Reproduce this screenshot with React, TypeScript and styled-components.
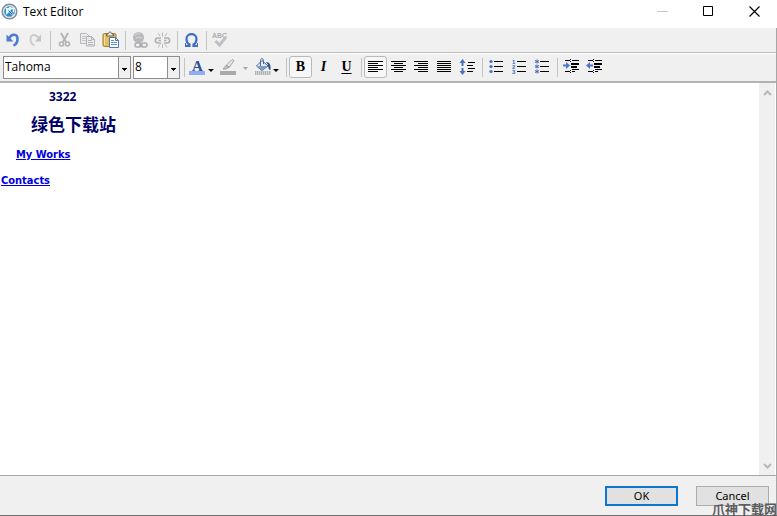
import React, { useState } from "react";
import styled, { createGlobalStyle, css } from "styled-components";

const Global = createGlobalStyle`
  *, *::before, *::after { box-sizing: border-box; }
  html, body, #root { height: 100%; margin: 0; }
  body { overflow: hidden; font-family: "Open Sans", "Noto Sans", sans-serif; font-size: 12px; color: #000; }
`;

const Window = styled.div`
  position: relative;
  display: flex;
  flex-direction: column;
  height: 100%;
  background: #f0f0f1;
  border-bottom: 1px solid #707070;
`;

const TitleBar = styled.header`
  display: flex;
  align-items: center;
  height: 28px;
  flex: none;
  background: #fff;
`;

const Title = styled.h1`
  flex: 1;
  margin: 0;
  padding: 0 5px 4px;
  font-size: 12px;
  font-weight: 400;
  line-height: 20px;
`;

const AppIcon = styled.svg`
  width: 17px;
  height: 17px;
  margin: 0 0 5px 1px;
`;

const CaptionButton = styled.button`
  display: flex;
  justify-content: center;
  width: 46px;
  height: 28px;
  padding: 5px 0 0;
  border: 0;
  background: none;
`;

const Body = styled.div`
  display: flex;
  flex-direction: column;
  flex: 1;
  min-height: 0;
  border-right: 1px solid #a6a6a6;
`;

const Toolbar = styled.div<{ $format?: boolean }>`
  display: flex;
  align-items: center;
  flex: none;
  ${(p) =>
    p.$format
      ? css`
          height: 30px;
          padding: 0 0 1px 3px;
          border-top: 1px solid #fff;
          border-bottom: 2px solid #b2b2b2;
        `
      : css`
          height: 25px;
          padding-left: 1px;
          border-bottom: 1px solid #bdbdbd;
        `}
`;

const Separator = styled.span`
  width: 6px;
  height: 19px;
  flex: none;
  background: linear-gradient(#c3c3c5, #c3c3c5) 3px 0 / 1px 100% no-repeat;
`;

const ToolButton = styled.button<{ $wide?: boolean }>`
  display: flex;
  align-items: center;
  justify-content: center;
  flex: none;
  width: ${(p) => (p.$wide ? 32 : 23)}px;
  height: 22px;
  padding: 0;
  border: 1px solid transparent;
  border-radius: 3px;
  background: none;
  color: #000;

  &[aria-pressed="true"] {
    border-color: #b9b9bb;
    background: #f7f7f8;
  }
  & > svg { flex: none; }
`;

const Combos = styled.div`
  display: flex;
  gap: 2px;
  padding-right: 1px;
`;

const Combo = styled.label<{ $size?: boolean }>`
  position: relative;
  display: flex;
  width: ${(p) => (p.$size ? 47 : 128)}px;
  height: 23px;
  border: 1px solid #8e8e8e;
  background: #fff;

  select {
    appearance: none;
    width: 100%;
    padding: 0 14px 0 1px;
    border: 0;
    outline: 0;
    background: none;
    font: 12px/20px "Open Sans", "Noto Sans", sans-serif;
    color: #000;
  }
`;

const ComboArrow = styled.span`
  position: absolute;
  top: 0;
  right: 0;
  bottom: 0;
  display: flex;
  align-items: center;
  justify-content: center;
  width: 12px;
  padding-top: 4px;
  border-left: 1px solid #8e8e8e;
  background: #f0f0f1;
  pointer-events: none;
`;

const Editor = styled.main`
  display: flex;
  flex: 1;
  min-height: 0;
  background: #fff;
  border-bottom: 1px solid #a8a8a8;
`;

const Document = styled.div`
  flex: 1;
  padding: 5px 1px;
  outline: 0;
  color: #000066;
  font-family: "DejaVu Sans Condensed", "Noto Sans", "Noto Sans CJK SC", sans-serif;
`;

const Paragraph = styled.p<{ $indent: number; $kind?: "number" | "cjk" }>`
  margin: 0;
  padding-left: ${(p) => p.$indent}px;
  font-size: 11px;
  font-weight: 700;
  line-height: 26px;
  ${(p) =>
    p.$kind === "number" &&
    css`
      font-family: "Noto Sans", sans-serif;
      font-size: 12px;
      line-height: 18px;
    `}
  ${(p) =>
    p.$kind === "cjk" &&
    css`
      font-family: "Noto Sans CJK SC", sans-serif;
      font-size: 17px;
      line-height: 36px;
    `}

  a { color: #0000dd; }
`;

const ScrollTrack = styled.div`
  display: flex;
  flex-direction: column;
  justify-content: space-between;
  width: 17px;
  background: #f0f0f1;
  border-right: 1px solid #fff;
`;

const ScrollButton = styled.button`
  display: flex;
  align-items: center;
  justify-content: center;
  height: 19px;
  padding: 0;
  border: 0;
  background: none;
`;

const Footer = styled.footer`
  display: flex;
  justify-content: flex-end;
  gap: 18px;
  flex: none;
  height: 39px;
  padding: 10px 7px;
`;

const DialogButton = styled.button<{ $primary?: boolean }>`
  width: 73px;
  height: 20px;
  padding: 0;
  border: ${(p) => (p.$primary ? "2px solid #0f76d0" : "1px solid #adadad")};
  background: #e1e1e1;
  font: 11px/16px "Noto Sans", sans-serif;
  color: #000;
`;

const Watermark = styled.span`
  position: absolute;
  right: 0;
  bottom: -2px;
  color: #5c5c5e;
  font: 700 13px/16px "Noto Sans CJK SC", sans-serif;
  pointer-events: none;
`;

type IconProps = { children: React.ReactNode; w?: number; crisp?: boolean };
const Icon = ({ children, w = 17, crisp }: IconProps) => (
  <svg width={w} height={18} viewBox={`0 0 ${w} 18`} fill="none" aria-hidden="true" shapeRendering={crisp ? "crispEdges" : "auto"}>
    {children}
  </svg>
);

const Chevron = ({ up }: { up?: boolean }) => (
  <svg width="9" height="6" viewBox="0 0 9 6" fill="none" aria-hidden="true">
    <path d={up ? "M1 5 4.5 1.5 8 5" : "M1 1 4.5 4.5 8 1"} stroke="#b8b8ba" strokeWidth="2" />
  </svg>
);

const DownTriangle = () => (
  <svg width="5" height="3" viewBox="0 0 5 3" shapeRendering="crispEdges" aria-hidden="true">
    <path d="M0 0h5v1H0zM1 1h3v1H1zM2 2h1v1H2z" fill="#000" />
  </svg>
);

const Undo = () => (
  <Icon>
    <path d="M2.500 3.500v7h7z" fill="#4c7dd2" />
    <path d="M5 7.500C7.500 2.500 13.500 2.500 13.500 8C13.500 11.500 12 13.500 9.500 14.500" stroke="#4c7dd2" strokeWidth="2.600" />
  </Icon>
);
const Redo = () => (
  <Icon>
    <path d="M14 3.500v7H8z" fill="#c4c4c7" />
    <path d="M12 7.500C9 2.500 3.500 3 3.500 8C3.500 11.500 5 13.500 7.500 14.500" stroke="#cdcdd0" strokeWidth="2" />
  </Icon>
);
const Cut = () => (
  <Icon>
    <path d="M5 2 10 11M12 2 7 11" stroke="#b2b2b5" strokeWidth="1.800" />
    <circle cx="5.500" cy="13" r="2" stroke="#b2b2b5" strokeWidth="1.600" />
    <circle cx="11.500" cy="13" r="2" stroke="#b2b2b5" strokeWidth="1.600" />
  </Icon>
);
const Copy = () => (
  <Icon>
    <path d="M1.500 2.500h6l3 3v7h-9z" fill="#ececee" stroke="#b7b7ba" />
    <path d="M3 5.500h4M3 7.500h5M3 9.500h4" stroke="#c4c4c7" />
    <path d="M7.500 5.500h5l3 3v6.500h-8z" fill="#ececee" stroke="#b2b2b5" />
    <path d="M12.500 5.500v3h3M9 9.500h4M9 11.500h5M9 13.500h5" stroke="#b7b7ba" />
  </Icon>
);
const Paste = () => (
  <Icon>
    <rect x="1" y="2.500" width="13" height="13" rx="1.500" fill="#e7bd5a" stroke="#a77a27" />
    <path d="M2.500 4v10" stroke="#f8e4a6" />
    <path d="M4.500 5V3h1.500c.5-2.600 3.500-2.600 4 0h1.500v2z" fill="#e9e5d8" stroke="#6e6450" />
    <path d="M7.500 6.500h6l3 3v7h-9z" fill="#fff" stroke="#4e79ad" />
    <path d="M9 9.500h3M9 11.500h6M9 13.500h6" stroke="#5c94d3" />
    <path d="M13.500 6.500v3h3" stroke="#4e79ad" />
  </Icon>
);
const Globe = () => (
  <Icon>
    <circle cx="7.500" cy="6.500" r="5.500" fill="#b8b8bb" />
    <path d="M4 5c1-3 4-3 5-2M5 7c2-1 4-1 6 0" stroke="#cfcfd1" strokeWidth="1.500" />
    <rect x="4" y="12" width="6" height="4" rx="2" fill="#f0f0f1" stroke="#acacaf" strokeWidth="1.500" />
    <rect x="10" y="12" width="6" height="4" rx="2" fill="#f0f0f1" stroke="#acacaf" strokeWidth="1.500" />
    <path d="M8 14h4" stroke="#acacaf" strokeWidth="1.500" />
  </Icon>
);
const Unlink = () => (
  <Icon>
    <path d="M7 7H4C.500 7 .500 12 4 12h3M10 7h3c3.500 0 3.500 5 0 5h-3M4.500 9.500H7M10 9.500h2.500" stroke="#b0b0b3" strokeWidth="1.600" />
    <path d="M8.500 1.500v4M4 2l2 3M13 2l-2 3M8.500 13v4M4 16.500l2-3M13 16.500l-2-3" stroke="#b9b9bc" />
  </Icon>
);
const Omega = () => (
  <Icon>
    <path d="M2 15h4.500v-1.500C4.500 12.500 3.500 10.500 3.500 8C3.500 1.500 13.500 1.500 13.500 8C13.500 10.500 12.500 12.500 10.500 13.500V15H15" stroke="#3f6fc4" strokeWidth="2.200" />
    <path d="M2.500 12v3M14.500 12v3" stroke="#3f6fc4" />
  </Icon>
);
const SpellCheck = () => (
  <Icon>
    <text x="0" y="7" fontFamily="Liberation Sans, sans-serif" fontSize="7" fontWeight="700" fill="#adadb0">ABC</text>
    <path d="M3.500 10 7.500 14 14 6" stroke="#c0c0c3" strokeWidth="3" />
  </Icon>
);

const LetterColor = () => (
  <Icon w={32}>
    <rect x="2" y="13" width="16" height="4" fill="#8eabf3" />
    <text x="5" y="13" fontFamily="Liberation Serif, serif" fontSize="15" fontWeight="700" fill="#2d528f">A</text>
    <path d="M21 11h6l-3 3z" fill="#000" />
  </Icon>
);
const Highlight = () => (
  <Icon w={32}>
    <rect x="1" y="13" width="16" height="4" fill="#a9a9ac" />
    <path d="M7 7.500 13 1.500l2 1L10.500 9z" fill="#e8e8ea" stroke="#a3a3a6" />
    <path d="M7 7.500 10.500 9 7 11H4z" fill="#c4c4c7" stroke="#a3a3a6" />
    <path d="M24 9h5l-2.500 3z" fill="#a5a5a8" />
  </Icon>
);
const Bucket = () => (
  <Icon w={32}>
    <path d="M4 13h16v4H4z" fill="#d2d2d3" />
    <path d="M4 14h16M4 16h16" stroke="#98989b" strokeDasharray="1 1" />
    <path d="M5.500 8 11 2.500 17 8 11 12.500z" fill="#e7edf6" stroke="#45679b" />
    <path d="M6 8h10.500L11 12z" fill="#7f9cc8" />
    <path d="M9.500 8V2.500c0-2.500 3-2.500 3 0V6" stroke="#45679b" />
    <path d="M15 4c4 0 5 3 4.500 8-2 0-2.500-3-2.500-5z" fill="#34578e" />
    <path d="M22 11h6l-3 3z" fill="#000" />
  </Icon>
);

const Glyph = styled.span<{ $mark: "b" | "i" | "u" }>`
  font: 700 14px/18px "Liberation Serif", serif;
  font-style: ${(p) => (p.$mark === "i" ? "italic" : "normal")};
  text-decoration: ${(p) => (p.$mark === "u" ? "underline" : "none")};
  text-underline-offset: 2px;
`;

const rows = [3, 5, 7, 9, 11, 13];
const alignSpans = {
  left: rows.map((_, i) => (i % 2 ? [1, 10] : [1, 15])),
  center: rows.map((_, i) => (i % 2 ? [4, 9] : [1, 15])),
  right: rows.map((_, i) => (i % 2 ? [5, 10] : [1, 14])),
  justify: rows.map(() => [1, 14]),
};
const Align = ({ mode }: { mode: keyof typeof alignSpans }) => (
  <Icon crisp>
    {rows.map((y, i) => (
      <rect key={y} x={alignSpans[mode][i][0]} y={y} width={alignSpans[mode][i][1]} height="1" fill="#000" />
    ))}
  </Icon>
);
const LineSpacing = () => (
  <Icon>
    <path d="M3.500 1 6.500 5h-2v3h-2V5h-2zM3.500 17l3-4h-2v-3h-2v3h-2z" fill="#4a70ba" />
    <path d="M9 4.500h7M8 7.500h6M9 10.500h7M8 13.500h6" stroke="#000" shapeRendering="crispEdges" />
  </Icon>
);
const List = ({ kind }: { kind: "bullet" | "number" | "star" }) => (
  <Icon>
    {[4, 9, 14].map((y, i) => (
      <g key={y}>
        <rect x="6" y={y - 1} width="9" height="1" fill="#000" shapeRendering="crispEdges" />
        {kind === "bullet" && <circle cx="3" cy={y - 0.5} r="1.600" fill="#476db7" />}
        {kind === "number" && (
          <text x="1" y={y + 2} fontFamily="Liberation Sans, sans-serif" fontSize="6" fontWeight="700" fill="#3b67bd">{i + 1}</text>
        )}
        {kind === "star" && <path d={`M3 ${y - 2.5}v4M1 ${y - 1.5}l4 2M5 ${y - 1.5}l-4 2`} stroke="#476db7" />}
      </g>
    ))}
  </Icon>
);
const Indent = ({ out }: { out?: boolean }) => (
  <Icon>
    <path d="M2 2.500h5M9 2.500h7M9 11.500h7M2 13.500h5M9 13.500h3" stroke="#000" shapeRendering="crispEdges" />
    <path d="M8 6h8M8 9h6" stroke="#000" strokeWidth="2" shapeRendering="crispEdges" />
    <path d="M7.500 1v3M7.500 12v4" stroke="#000" strokeDasharray="1 1" shapeRendering="crispEdges" />
    <path d={out ? "M0 7.500 4 4v2.500h3v2H4V11z" : "M7 7.500 3 4v2.500H0v2h3V11z"} fill="#4a78cc" />
  </Icon>
);

type Tool = { label: string; icon: React.ReactNode; disabled?: boolean; wide?: boolean };
const standardTools: Tool[][] = [
  [
    { label: "Undo", icon: <Undo /> },
    { label: "Redo", icon: <Redo />, disabled: true },
  ],
  [
    { label: "Cut", icon: <Cut />, disabled: true },
    { label: "Copy", icon: <Copy />, disabled: true },
    { label: "Paste", icon: <Paste /> },
  ],
  [
    { label: "Insert link", icon: <Globe />, disabled: true },
    { label: "Remove link", icon: <Unlink />, disabled: true },
  ],
  [{ label: "Insert symbol", icon: <Omega /> }],
  [{ label: "Check spelling", icon: <SpellCheck />, disabled: true }],
];
const formatTools: Tool[][] = [
  [
    { label: "Text color", icon: <LetterColor />, wide: true },
    { label: "Highlight color", icon: <Highlight />, wide: true, disabled: true },
    { label: "Background color", icon: <Bucket />, wide: true },
  ],
  [
    { label: "Bold", icon: <Glyph $mark="b">B</Glyph> },
    { label: "Italic", icon: <Glyph $mark="i">I</Glyph> },
    { label: "Underline", icon: <Glyph $mark="u">U</Glyph> },
  ],
  [
    { label: "Align left", icon: <Align mode="left" /> },
    { label: "Align center", icon: <Align mode="center" /> },
    { label: "Align right", icon: <Align mode="right" /> },
    { label: "Justify", icon: <Align mode="justify" /> },
    { label: "Line spacing", icon: <LineSpacing /> },
  ],
  [
    { label: "Bulleted list", icon: <List kind="bullet" /> },
    { label: "Numbered list", icon: <List kind="number" /> },
    { label: "Custom list", icon: <List kind="star" /> },
  ],
  [
    { label: "Increase indent", icon: <Indent /> },
    { label: "Decrease indent", icon: <Indent out /> },
  ],
];

export default function App() {
  const [pressed, setPressed] = useState<string[]>(["Bold", "Align left"]);
  const toggle = (label: string) =>
    setPressed((list) => (list.includes(label) ? list.filter((l) => l !== label) : [...list, label]));

  return (
    <>
      <Global />
      <Window>
        <TitleBar>
          <AppIcon viewBox="0 0 17 17" fill="none" aria-hidden="true">
            <circle cx="8.500" cy="8.500" r="7.300" fill="#e3e9f0" stroke="#7f8b96" strokeWidth="1.500" />
            <circle cx="8.500" cy="8.500" r="5.300" fill="#2f8fcb" />
            <path d="M5 12V5h7z" fill="#e9f6ff" />
            <path d="M5 5l8 8M8 4.500l4.500 1v4" stroke="#e9f6ff" strokeWidth="1.500" />
            <path d="M7.500 7.500l4 4" stroke="#1769a8" />
          </AppIcon>
          <Title>Text Editor</Title>
          <CaptionButton aria-label="Minimize" disabled>
            <svg width="11" height="12" viewBox="0 0 11 12"><path d="M0 6h11v1H0z" fill="#c8c8c8" /></svg>
          </CaptionButton>
          <CaptionButton aria-label="Maximize">
            <svg width="11" height="12" viewBox="0 0 11 12"><path d="M.5 1.500h9v9h-9z" fill="none" stroke="#000" /></svg>
          </CaptionButton>
          <CaptionButton aria-label="Close">
            <svg width="11" height="12" viewBox="0 0 11 12"><path d="M.5 1.500l10 10M10.500 1.500l-10 10" stroke="#000" strokeWidth="1.200" /></svg>
          </CaptionButton>
        </TitleBar>
        <Body>
          <Toolbar role="toolbar" aria-label="Standard">
            {standardTools.map((group, i) => (
              <React.Fragment key={i}>
                {i > 0 && <Separator />}
                {group.map((t) => (
                  <ToolButton key={t.label} aria-label={t.label} disabled={t.disabled}>{t.icon}</ToolButton>
                ))}
              </React.Fragment>
            ))}
          </Toolbar>
          <Toolbar $format role="toolbar" aria-label="Formatting">
            <Combos>
              <Combo>
                <select aria-label="Font" defaultValue="Tahoma"><option>Tahoma</option></select>
                <ComboArrow><DownTriangle /></ComboArrow>
              </Combo>
              <Combo $size>
                <select aria-label="Font size" defaultValue="8"><option>8</option></select>
                <ComboArrow><DownTriangle /></ComboArrow>
              </Combo>
            </Combos>
            {formatTools.map((group, i) => (
              <React.Fragment key={i}>
                <Separator />
                {group.map((t) => (
                  <ToolButton
                    key={t.label}
                    $wide={t.wide}
                    aria-label={t.label}
                    aria-pressed={pressed.includes(t.label)}
                    disabled={t.disabled}
                    onClick={() => !t.wide && toggle(t.label)}
                  >
                    {t.icon}
                  </ToolButton>
                ))}
              </React.Fragment>
            ))}
          </Toolbar>
          <Editor>
            <Document role="textbox" aria-multiline="true" aria-label="Text" contentEditable suppressContentEditableWarning spellCheck={false}>
              <Paragraph $indent={48} $kind="number">3322</Paragraph>
              <Paragraph $indent={30} $kind="cjk">绿色下载站</Paragraph>
              <Paragraph $indent={15}><a href="#works">My Works</a></Paragraph>
              <Paragraph $indent={0}><a href="#contacts">Contacts</a></Paragraph>
            </Document>
            <ScrollTrack>
              <ScrollButton aria-label="Scroll up"><Chevron up /></ScrollButton>
              <ScrollButton aria-label="Scroll down"><Chevron /></ScrollButton>
            </ScrollTrack>
          </Editor>
          <Footer>
            <DialogButton $primary>OK</DialogButton>
            <DialogButton>Cancel</DialogButton>
          </Footer>
        </Body>
        <Watermark>爪神下载网</Watermark>
      </Window>
    </>
  );
}
